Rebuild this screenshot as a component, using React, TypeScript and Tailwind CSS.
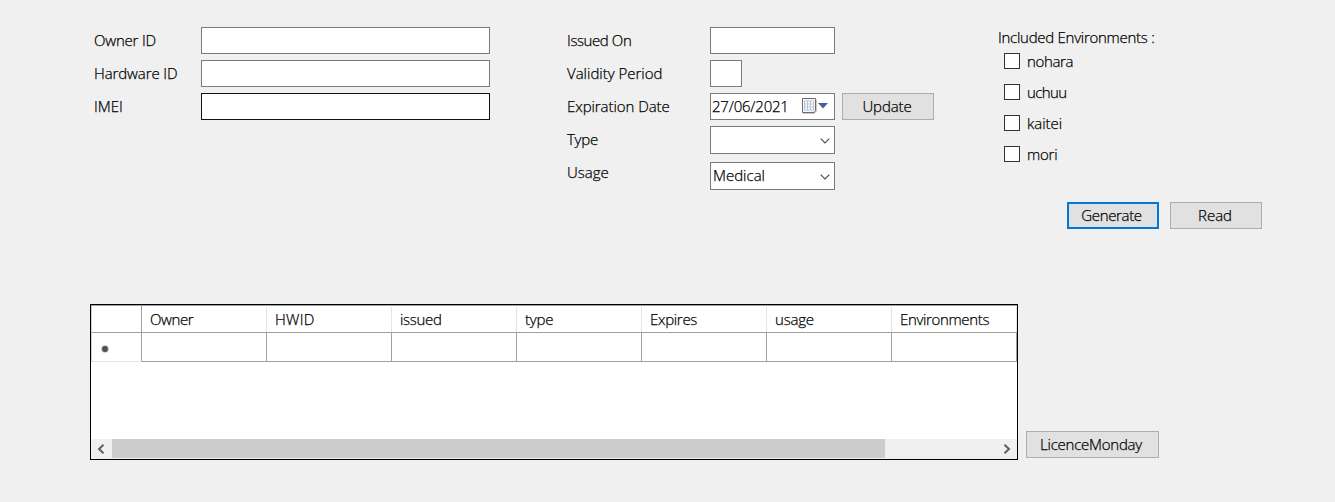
import React from "react";

const box = "border border-[#7a7a7a] bg-white";

function Label({ children, track = "" }: { children: React.ReactNode; track?: string }) {
  return <span className={`whitespace-pre leading-[20px] ${track}`}>{children}</span>;
}

function Button({ children, className, primary }: { children: React.ReactNode; className: string; primary?: boolean }) {
  return (
    <button
      className={`flex h-[27px] items-center justify-center bg-[#e1e1e1] pb-[2px] ${
        primary ? "border-2 border-[#0078d7]" : "border border-[#adadad]"
      } ${className}`}
    >
      {children}
    </button>
  );
}

function Chevron() {
  return (
    <svg width="10" height="6" viewBox="0 0 10 6" className="mr-[4px] shrink-0">
      <path d="M0.7 0.7L5 5L9.3 0.7" fill="none" stroke="#4c4c4c" strokeWidth="1.1" />
    </svg>
  );
}

function Calendar() {
  return (
    <svg width="26" height="16" viewBox="0 0 26 16" className="mr-[6px] shrink-0">
      <path d="M1 1.5H15V13L12.5 16H1Z" fill="#d3c6c1" />
      <path d="M0.5 0.5H13.5V12.5L12 14.5H0.5Z" fill="#f5f7fa" stroke="#75676a" />
      <path d="M2 2.5H12V12.5H2Z" fill="#b9c5d2" />
      <path
        d="M3 3.5h2v2h-2zM6 3.5h2v2h-2zM9 3.5h2v2h-2zM3 6.5h2v2h-2zM6 6.5h2v2h-2zM9 6.5h2v2h-2zM3 9.5h2v2h-2zM6 9.5h2v2h-2zM9 9.5h2v2h-2z"
        fill="#fff"
      />
      <path d="M16 5H26L21 10.5Z" fill="#42619c" />
    </svg>
  );
}

const ownerFields = [
  { name: "Owner ID", track: "tracking-[-0.2px]", border: "border-[#7a7a7a]" },
  { name: "Hardware ID", track: "tracking-[-0.1px]", border: "border-[#7a7a7a]" },
  { name: "IMEI", track: "", border: "border-[#111]" },
];

const licenceFields = [
  { name: "Issued On", track: "tracking-[-0.4px]" },
  { name: "Validity Period", track: "" },
  { name: "Expiration Date", track: "tracking-[-0.06px]" },
  { name: "Type", track: "tracking-[-0.25px]" },
  { name: "Usage", track: "" },
];

const environments = [
  { name: "nohara", track: "tracking-[-0.35px]" },
  { name: "uchuu", track: "tracking-[-0.6px]" },
  { name: "kaitei", track: "" },
  { name: "mori", track: "tracking-[-0.25px]" },
];

const columns = [
  { name: "Owner", track: "tracking-[-0.4px]" },
  { name: "HWID", track: "tracking-[0.25px]" },
  { name: "issued", track: "tracking-[-0.3px]" },
  { name: "type", track: "tracking-[-0.2px]" },
  { name: "Expires", track: "tracking-[-0.3px]" },
  { name: "usage", track: "tracking-[-0.2px]" },
  { name: "Environments", track: "tracking-[-0.35px]" },
];

export default function App() {
  return (
    <div className="flex h-[502px] w-[1335px] flex-col overflow-hidden bg-[#f0f0f0] font-['Open_Sans',sans-serif] text-[15px] font-light text-black [-webkit-text-stroke:0.25px_black]">
      <div className="flex h-[202px] shrink-0 pt-[27px] pl-[94px]">
        <div className="flex w-[473px] flex-col gap-[6px]">
          {ownerFields.map((f) => (
            <div key={f.name} className="flex h-[27px] items-center">
              <div className="w-[107px]"><Label track={f.track}>{f.name}</Label></div>
              <div className={`h-[27px] w-[289px] border bg-white ${f.border}`} />
            </div>
          ))}
        </div>
        <div className="flex w-[143px] flex-col gap-[6px]">
          {licenceFields.map((f) => (
            <div key={f.name} className="flex h-[27px] items-center pb-[2px]"><Label track={f.track}>{f.name}</Label></div>
          ))}
        </div>
        <div className="flex w-[288px] flex-col">
          <div className={`h-[27px] w-[125px] ${box}`} />
          <div className={`mt-[6px] h-[27px] w-[32px] ${box}`} />
          <div className="mt-[6px] flex gap-[7px]">
            <div className={`flex h-[27px] w-[125px] items-center justify-between pb-px pl-[1px] ${box}`}>
              <Label track="tracking-[-0.2px]">27/06/2021</Label>
              <Calendar />
            </div>
            <Button className="w-[92px] pr-[2px]"><Label track="tracking-[-0.1px]">Update</Label></Button>
          </div>
          <div className={`mt-[6px] flex h-[28px] w-[125px] items-center justify-end pt-px ${box}`}>
            <Chevron />
          </div>
          <div className={`mt-[8px] flex h-[28px] w-[125px] justify-between pt-[2px] pl-[2px] ${box}`}>
            <Label>Medical</Label>
            <div className="flex items-center pb-px"><Chevron /></div>
          </div>
        </div>
        <div className="flex flex-col">
          <div className="flex h-[22px] items-center pb-[2px]">
            <Label track="tracking-[-0.27px]">Included Environments :</Label>
          </div>
          <div className="mt-[4px] ml-[6px] flex flex-col gap-[15px]">
            {environments.map((e) => (
              <label key={e.name} className="flex h-[16px] items-center gap-[7px]">
                <span className="size-[16px] border border-[#333] bg-white" />
                <Label track={e.track}>{e.name}</Label>
              </label>
            ))}
          </div>
        </div>
      </div>
      <div className="flex shrink-0 gap-[11px] pl-[1067px]">
        <Button className="w-[92px] pr-[3px]" primary><Label track="tracking-[-0.35px]">Generate</Label></Button>
        <Button className="w-[92px] pr-[2px]"><Label>Read</Label></Button>
      </div>
      <div className="mt-[75px] flex items-end gap-[8px] pl-[90px]">
        <div className="flex h-[156px] w-[928px] flex-col border border-black bg-white">
          <div className="flex h-[28px] shrink-0 border-t border-b border-l border-[#a0a0a0] border-l-[#d0d0d0]">
            <div className="w-[50px] shrink-0 border-r border-[#a0a0a0]" />
            {columns.map((c) => (
              <div key={c.name} className="flex w-[125px] shrink-0 pt-px">
                <div className="flex grow items-center border-r border-[#e5e5e5] pb-px pl-[8px]">
                  <Label track={c.track}>{c.name}</Label>
                </div>
              </div>
            ))}
          </div>
          <div className="flex h-[29px] shrink-0 border-l border-[#d0d0d0]">
            <div className="flex w-[50px] shrink-0 items-center border-r border-b border-r-[#a0a0a0] border-b-[#e5e5e5] pl-[9px]">
              <svg width="8" height="8" viewBox="0 0 8 8" className="mt-[4px]">
                <circle cx="4" cy="4" r="3.8" fill="#c4c4c4" />
                <circle cx="4" cy="4" r="2.9" fill="#505050" />
              </svg>
            </div>
            {columns.map((c) => (
              <div key={c.name} className="w-[125px] shrink-0 border-r border-b border-[#a0a0a0]" />
            ))}
          </div>
          <div className="mt-auto flex h-[20px] items-center bg-[#f0f0f0] pb-px">
            <div className="flex w-[21px] justify-center pr-[2px]">
              <svg width="8" height="10" viewBox="0 0 8 10">
                <path d="M6.5 0.7L2 5L6.5 9.3" fill="none" stroke="#606060" strokeWidth="2" />
              </svg>
            </div>
            <div className="h-[19px] w-[773px] bg-[#cdcdcd]" />
            <div className="ml-auto flex w-[21px] justify-center">
              <svg width="8" height="10" viewBox="0 0 8 10">
                <path d="M1.5 0.7L6 5L1.5 9.3" fill="none" stroke="#606060" strokeWidth="2" />
              </svg>
            </div>
          </div>
        </div>
        <Button className="mb-[2px] w-[133px] pr-[3px]"><Label track="tracking-[-0.25px]">LicenceMonday</Label></Button>
      </div>
    </div>
  );
}
